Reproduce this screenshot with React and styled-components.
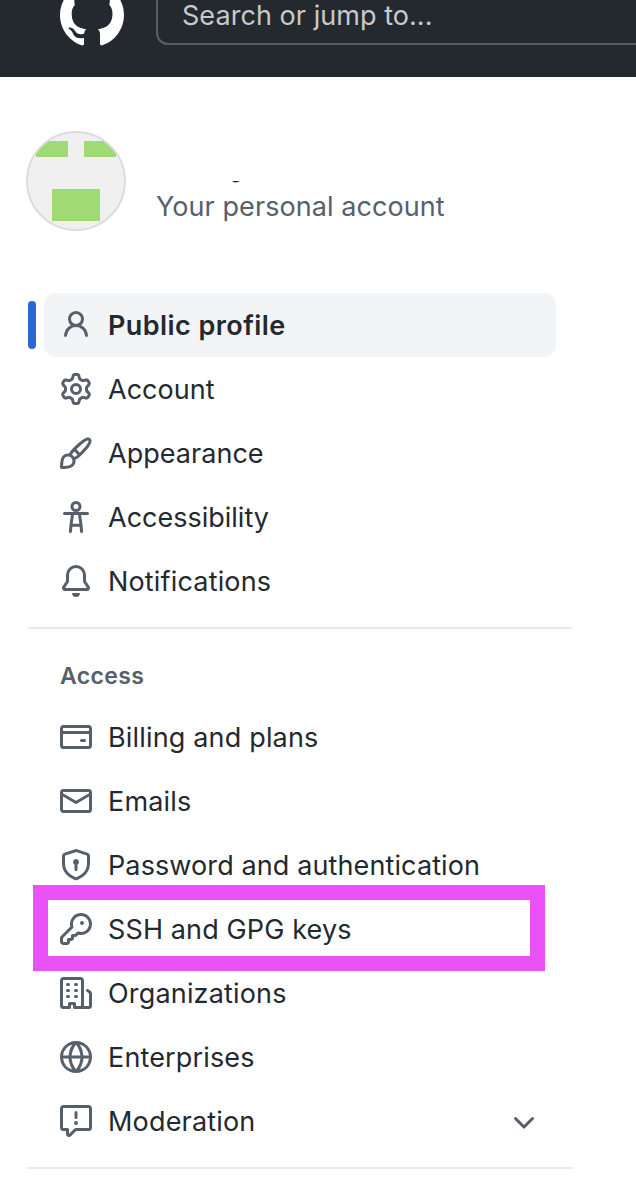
import React from 'react';
import styled, { createGlobalStyle } from 'styled-components';

const GlobalStyle = createGlobalStyle`
  * { box-sizing: border-box; }
  body {
    margin: 0;
    background: #fff;
    color: #24292f;
    font-family: Inter, "Liberation Sans", sans-serif;
    font-size: 27px;
    overflow: hidden;
  }
`;

const Page = styled.div`
  height: 1182px;
  overflow: hidden;
`;

const Header = styled.header`
  display: flex;
  align-items: flex-end;
  gap: 32px;
  height: 77px;
  padding: 0 0 32px 60px;
  background: #24292f;
  overflow: hidden;
`;

const Mark = styled.svg`
  flex: none;
  width: 64px;
  height: 64px;
  margin-bottom: -2px;
  fill: #fff;
`;

const Search = styled.div`
  flex: none;
  display: flex;
  align-items: center;
  width: 544px;
  height: 60px;
  padding-left: 24px;
  border: 2px solid #57606a;
  border-radius: 12px;
  color: #c8c9cb;
`;

const Text = styled.span`
  padding-top: 2px;
  white-space: nowrap;
  line-height: 28px;
  letter-spacing: ${(p) => p.$spacing || 0}px;
`;

const Profile = styled.section`
  display: flex;
  gap: 30px;
  padding: 54px 26px 0;
  height: 216px;
`;

const Avatar = styled.svg`
  flex: none;
  width: 100px;
  height: 100px;
`;

const Identity = styled.div`
  display: flex;
  flex-direction: column;
  gap: 7px;
  padding-top: 49px;
  color: #57606a;
`;

const NameTrace = styled.svg`
  display: block;
  width: 12px;
  height: 4px;
  margin-left: 74px;
`;

const Nav = styled.nav`
  width: 544px;
  margin-left: 28px;
`;

const List = styled.ul`
  list-style: none;
  margin: 0;
  padding: 0 16px;
`;

const Item = styled.li`
  position: relative;
  display: flex;
  align-items: center;
  gap: 16px;
  height: 64px;
  padding: 0 16px;
  border-radius: 12px;
  background: ${(p) => (p.$active ? '#f3f4f6' : 'transparent')};
  font-weight: ${(p) => (p.$active ? 600 : 400)};
`;

const ActiveBar = styled.span`
  position: absolute;
  left: -16px;
  top: 8px;
  width: 8px;
  height: 48px;
  border-radius: 4px;
  background: #2c66d6;
`;

const Highlight = styled.span`
  position: absolute;
  left: -11px;
  top: -12px;
  width: 512px;
  height: 86px;
  border: 15px solid #ea52f8;
`;

const Glyph = styled.svg`
  flex: none;
  width: 32px;
  height: 32px;
  fill: #57606a;
`;

const Chevron = styled(Glyph)`
  margin-left: auto;
`;

const Divider = styled.hr`
  height: 2px;
  margin: 14px 0;
  border: 0;
  background: #e6e9ed;
`;

const GroupTitle = styled.h2`
  margin: 0;
  padding: 13px 0 0 32px;
  height: 62px;
  color: #57606a;
  font-size: 23px;
  font-weight: 600;
  line-height: 40px;
  letter-spacing: ${(p) => p.$spacing}px;
`;

const icons = {
  person: 'M10.5 5a2.5 2.5 0 11-5 0 2.5 2.5 0 015 0zm.061 3.073a4 4 0 10-5.123 0 6.004 6.004 0 00-3.431 5.142.75.75 0 001.498.07 4.5 4.5 0 018.99 0 .75.75 0 101.498-.07 6.005 6.005 0 00-3.432-5.142z',
  gear: 'M7.429 1.525a6.593 6.593 0 011.142 0c.036.003.108.036.137.146l.289 1.105c.147.56.55.967.997 1.189.174.086.341.183.501.29.417.278.97.423 1.53.27l1.102-.303c.11-.03.175.016.195.046.219.31.41.641.573.989.014.031.022.11-.059.19l-.815.806c-.411.406-.562.957-.53 1.456a4.588 4.588 0 010 .582c-.032.499.119 1.05.53 1.456l.815.806c.08.08.073.159.059.19a6.494 6.494 0 01-.573.99c-.02.029-.086.074-.195.045l-1.103-.303c-.559-.153-1.112-.008-1.529.27-.16.107-.327.204-.5.29-.449.222-.851.628-.998 1.189l-.289 1.105c-.029.11-.101.143-.137.146a6.613 6.613 0 01-1.142 0c-.036-.003-.108-.037-.137-.146l-.289-1.105c-.147-.56-.55-.967-.997-1.189a4.502 4.502 0 01-.501-.29c-.417-.278-.97-.423-1.53-.27l-1.102.303c-.11.03-.175-.016-.195-.046a6.492 6.492 0 01-.573-.989c-.014-.031-.022-.11.059-.19l.815-.806c.411-.406.562-.957.53-1.456a4.587 4.587 0 010-.582c.032-.499-.119-1.05-.53-1.456l-.815-.806c-.08-.08-.073-.159-.059-.19a6.44 6.44 0 01.573-.99c.02-.029.086-.075.195-.045l1.103.303c.559.153 1.112.008 1.529-.27.16-.107.327-.204.5-.29.449-.222.851-.628.998-1.189l.289-1.105c.029-.11.101-.143.137-.146zM8 0c-.236 0-.47.01-.701.03-.743.065-1.29.615-1.458 1.261l-.29 1.106c-.017.066-.078.158-.211.224a5.994 5.994 0 00-.668.386c-.123.082-.233.09-.3.071L3.27 2.776c-.644-.177-1.392.02-1.82.63a7.977 7.977 0 00-.704 1.217c-.315.675-.111 1.422.363 1.891l.815.806c.05.048.098.147.088.294a6.084 6.084 0 000 .772c.01.147-.038.246-.088.294l-.815.806c-.474.469-.678 1.216-.363 1.891.2.428.436.835.704 1.218.428.609 1.176.806 1.82.63l1.103-.303c.066-.019.176-.011.299.071.213.143.436.272.668.386.133.066.194.158.212.224l.289 1.106c.169.646.715 1.196 1.458 1.26a8.094 8.094 0 001.402 0c.743-.064 1.29-.614 1.458-1.26l.29-1.106c.017-.066.078-.158.211-.224a5.98 5.98 0 00.668-.386c.123-.082.233-.09.3-.071l1.102.302c.644.177 1.392-.02 1.82-.63.268-.382.505-.789.704-1.217.315-.675.111-1.422-.364-1.891l-.814-.806c-.05-.048-.098-.147-.088-.294a6.1 6.1 0 000-.772c-.01-.147.039-.246.088-.294l.814-.806c.475-.469.679-1.216.364-1.891a7.992 7.992 0 00-.704-1.218c-.428-.609-1.176-.806-1.82-.63l-1.103.303c-.066.019-.176.011-.299-.071a5.991 5.991 0 00-.668-.386c-.133-.066-.194-.158-.212-.224L10.16 1.29C9.99.645 9.444.095 8.701.031A8.094 8.094 0 008 0zm1.5 8a1.5 1.5 0 11-3 0 1.5 1.5 0 013 0zM11 8a3 3 0 11-6 0 3 3 0 016 0z',
  brush: 'M11.134 1.535C9.722 2.562 8.16 4.057 6.889 5.312 5.8 6.387 5.041 7.401 4.575 8.294a3.745 3.745 0 00-3.227 1.054c-.43.431-.69 1.066-.86 1.657a11.982 11.982 0 00-.358 1.914A21.263 21.263 0 000 15.203v.054l.75-.007-.007.75h.054a14.404 14.404 0 00.654-.012 21.243 21.243 0 001.63-.118c.62-.07 1.3-.18 1.914-.357.592-.17 1.226-.43 1.657-.861a3.745 3.745 0 001.055-3.217c.908-.461 1.942-1.216 3.04-2.3 1.279-1.262 2.764-2.825 3.775-4.249.501-.706.923-1.428 1.125-2.096.2-.659.235-1.469-.368-2.07-.606-.607-1.42-.55-2.069-.34-.66.213-1.376.646-2.076 1.155zm-3.95 8.48a3.76 3.76 0 00-1.19-1.192 9.758 9.758 0 011.161-1.607l1.658 1.658a9.853 9.853 0 01-1.63 1.142zM.742 16l.007-.75-.75.008A.75.75 0 00.743 16zM12.016 2.749c-1.224.89-2.605 2.189-3.822 3.384l1.718 1.718c1.21-1.205 2.51-2.597 3.387-3.833.47-.662.78-1.227.912-1.662.134-.444.032-.551.009-.575h-.001V1.78c-.014-.014-.112-.113-.548.027-.432.14-.995.462-1.655.942zM1.62 13.089a19.56 19.56 0 00-.104 1.395 19.55 19.55 0 001.396-.104 10.528 10.528 0 001.668-.309c.526-.151.856-.325 1.011-.48a2.25 2.25 0 00-3.182-3.182c-.155.155-.329.485-.48 1.01a10.515 10.515 0 00-.309 1.67z',
  bell: 'M8 16a2 2 0 001.985-1.75c.017-.137-.097-.25-.235-.25h-3.5c-.138 0-.252.113-.235.25A2 2 0 008 16zM3 5a5 5 0 0110 0v2.947c0 .05.015.098.042.139l1.703 2.555A1.518 1.518 0 0113.482 13H2.518a1.518 1.518 0 01-1.263-2.36l1.703-2.554A.25.25 0 003 7.947V5zm5-3.5A3.5 3.5 0 004.5 5v2.947c0 .346-.102.683-.294.97l-1.703 2.556a.018.018 0 00-.003.01l.001.006c0 .002.002.004.004.006a.017.017 0 00.006.004l.007.001h10.964l.007-.001a.016.016 0 00.006-.004.016.016 0 00.004-.006l.001-.007a.017.017 0 00-.003-.01l-1.703-2.554a1.75 1.75 0 01-.294-.97V5A3.5 3.5 0 008 1.5z',
  card: 'M10.75 9a.75.75 0 000 1.5h1.5a.75.75 0 000-1.5h-1.5zM0 3.75C0 2.784.784 2 1.75 2h12.5c.966 0 1.75.784 1.75 1.75v8.5A1.75 1.75 0 0114.25 14H1.75A1.75 1.75 0 010 12.25v-8.5zm14.5 0V5h-13V3.75a.25.25 0 01.25-.25h12.5a.25.25 0 01.25.25zm0 2.75h-13v5.75c0 .138.112.25.25.25h12.5a.25.25 0 00.25-.25V6.5z',
  mail: 'M1.75 2A1.75 1.75 0 000 3.75v.736a.75.75 0 000 .027v7.737C0 13.216.784 14 1.75 14h12.5A1.75 1.75 0 0016 12.25v-8.5A1.75 1.75 0 0014.25 2H1.75zM14.5 4.07v-.32a.25.25 0 00-.25-.25H1.75a.25.25 0 00-.25.25v.32L8 7.88l6.5-3.81zm-13 1.74v6.441c0 .138.112.25.25.25h12.5a.25.25 0 00.25-.25V5.809L8.38 9.397a.75.75 0 01-.76 0L1.5 5.809z',
  shield: 'M8.533.133a1.75 1.75 0 00-1.066 0l-5.25 1.68A1.75 1.75 0 001 3.48V7c0 1.566.32 3.182 1.303 4.682.983 1.498 2.585 2.813 5.032 3.855a1.7 1.7 0 001.33 0c2.447-1.042 4.049-2.357 5.032-3.855C14.68 10.182 15 8.566 15 7V3.48a1.75 1.75 0 00-1.217-1.667L8.533.133zm-.61 1.429a.25.25 0 01.153 0l5.25 1.68a.25.25 0 01.174.238V7c0 1.358-.275 2.666-1.057 3.86-.784 1.194-2.121 2.34-4.366 3.297a.2.2 0 01-.154 0c-2.245-.956-3.582-2.104-4.366-3.298C2.775 9.666 2.5 8.36 2.5 7V3.48a.25.25 0 01.174-.237l5.25-1.68zM9.5 6.5a1.5 1.5 0 01-.75 1.3v2.45a.75.75 0 01-1.5 0V7.8A1.5 1.5 0 119.5 6.5z',
  key: 'M6.5 5.5a4 4 0 112.731 3.795.75.75 0 00-.768.18L7.44 10.5H6.25a.75.75 0 00-.75.75v1.19l-.06.06H4.25a.75.75 0 00-.75.75v1.19l-.06.06H1.75a.25.25 0 01-.25-.25v-1.69l5.024-5.023a.75.75 0 00.181-.768A3.995 3.995 0 016.5 5.5zm4-5.5a5.5 5.5 0 00-5.348 6.788L.22 11.72a.75.75 0 00-.22.53v2C0 15.216.784 16 1.75 16h2a.75.75 0 00.53-.22l.5-.5a.75.75 0 00.22-.53V14h.75a.75.75 0 00.53-.22l.5-.5a.75.75 0 00.22-.53V12h.75a.75.75 0 00.53-.22l.932-.932A5.5 5.5 0 1010.5 0zm.5 6a1 1 0 100-2 1 1 0 000 2z',
  organization: 'M1.5 14.25c0 .138.112.25.25.25H4v-1.25a.75.75 0 01.75-.75h2.5a.75.75 0 01.75.75v1.25h2.25a.25.25 0 00.25-.25V1.75a.25.25 0 00-.25-.25h-8.5a.25.25 0 00-.25.25v12.5zM1.75 16A1.75 1.75 0 010 14.25V1.75C0 .784.784 0 1.75 0h8.5C11.216 0 12 .784 12 1.75v12.5c0 .085-.006.168-.018.25h2.268a.25.25 0 00.25-.25V8.285a.25.25 0 00-.111-.208l-1.055-.703a.75.75 0 11.832-1.248l1.055.703c.487.325.779.871.779 1.456v5.965A1.75 1.75 0 0114.25 16h-3.5a.75.75 0 01-.197-.026c-.099.017-.2.026-.303.026h-3a.75.75 0 01-.75-.75V14h-1v1.25a.75.75 0 01-.75.75h-3zM3 3.75A.75.75 0 013.75 3h.5a.75.75 0 010 1.5h-.5A.75.75 0 013 3.75zM3.75 6a.75.75 0 000 1.5h.5a.75.75 0 000-1.5h-.5zM3 9.75A.75.75 0 013.75 9h.5a.75.75 0 010 1.5h-.5A.75.75 0 013 9.75zM7.75 9a.75.75 0 000 1.5h.5a.75.75 0 000-1.5h-.5zM7 6.75A.75.75 0 017.75 6h.5a.75.75 0 010 1.5h-.5A.75.75 0 017 6.75zM7.75 3a.75.75 0 000 1.5h.5a.75.75 0 000-1.5h-.5z',
  globe: 'M1.543 7.25h2.733c.144-2.074.866-3.756 1.58-4.948.12-.197.237-.381.353-.552a6.506 6.506 0 00-4.666 5.5zm2.733 1.5H1.543a6.506 6.506 0 004.666 5.5 11.13 11.13 0 01-.352-.552c-.715-1.192-1.437-2.874-1.581-4.948zm1.504 0h4.44a9.637 9.637 0 01-1.363 4.177c-.306.51-.612.919-.857 1.215a9.978 9.978 0 01-.857-1.215A9.637 9.637 0 015.78 8.75zm4.44-1.5H5.78a9.637 9.637 0 011.363-4.177c.306-.51.612-.919.857-1.215.245.296.55.705.857 1.215A9.638 9.638 0 0110.22 7.25zm1.504 1.5c-.144 2.074-.866 3.756-1.58 4.948-.12.197-.237.381-.353.552a6.506 6.506 0 004.666-5.5h-2.733zm2.733-1.5h-2.733c-.144-2.074-.866-3.756-1.58-4.948a11.738 11.738 0 00-.353-.552 6.506 6.506 0 014.666 5.5zM8 0a8 8 0 100 16A8 8 0 008 0z',
  report: 'M0 1.75C0 .784.784 0 1.75 0h12.5C15.216 0 16 .784 16 1.75v9.5A1.75 1.75 0 0114.25 13H8.06l-2.573 2.573A1.457 1.457 0 013 14.543V13H1.75A1.75 1.75 0 010 11.25v-9.5zm1.75-.25a.25.25 0 00-.25.25v9.5c0 .138.112.25.25.25h2a.75.75 0 01.75.75v2.189l2.72-2.719a.75.75 0 01.53-.22h6.5a.25.25 0 00.25-.25v-9.5a.25.25 0 00-.25-.25H1.75zM9 9a1 1 0 11-2 0 1 1 0 012 0zm-.25-5.25a.75.75 0 00-1.5 0v2.5a.75.75 0 001.5 0v-2.5z',
  chevron: 'M12.78 6.22a.75.75 0 010 1.06l-4.25 4.25a.75.75 0 01-1.06 0L3.22 7.28a.75.75 0 011.06-1.06L8 9.94l3.72-3.72a.75.75 0 011.06 0z',
  github: 'M8 0C3.58 0 0 3.58 0 8c0 3.54 2.29 6.53 5.47 7.59.4.07.55-.17.55-.38 0-.19-.01-.82-.01-1.49-2.01.37-2.53-.49-2.69-.94-.09-.23-.48-.94-.82-1.13-.28-.15-.68-.52-.01-.53.63-.01 1.08.58 1.23.82.72 1.21 1.87.87 2.33.66.07-.52.28-.87.51-1.07-1.78-.2-3.64-.89-3.64-3.95 0-.87.31-1.59.82-2.15-.08-.2-.36-1.02.08-2.12 0 0 .67-.21 2.2.82.64-.18 1.32-.27 2-.27.68 0 1.36.09 2 .27 1.53-1.04 2.2-.82 2.2-.82.44 1.1.16 1.92.08 2.12.51.56.82 1.27.82 2.15 0 3.07-1.87 3.75-3.65 3.95.29.25.54.73.54 1.48 0 1.07-.01 1.93-.01 2.2 0 .21.15.46.55.38A8.013 8.013 0 0016 8c0-4.42-3.58-8-8-8z',
};

function Icon({ name }) {
  if (name === 'accessibility') {
    return (
      <Glyph viewBox="0 0 16 16">
        <g fill="none" stroke="#57606a" strokeWidth="1.5" strokeLinecap="round" strokeLinejoin="round">
          <circle cx="8" cy="2.75" r="2" />
          <path d="M2.25 6.2h11.5M6.3 6.4l-.7 4.8-.4 4.05M9.7 6.4l.7 4.8.4 4.05M5.7 12.1h4.6" />
        </g>
      </Glyph>
    );
  }
  return (
    <Glyph viewBox="0 0 16 16">
      <path fillRule="evenodd" d={icons[name]} />
    </Glyph>
  );
}

const general = [
  { icon: 'person', label: 'Public profile', active: true, spacing: 0.43 },
  { icon: 'gear', label: 'Account', spacing: 0.03 },
  { icon: 'brush', label: 'Appearance', spacing: 0.03 },
  { icon: 'accessibility', label: 'Accessibility', spacing: 0 },
  { icon: 'bell', label: 'Notifications', spacing: 0.17 },
];

const access = [
  { icon: 'card', label: 'Billing and plans', spacing: 0.17 },
  { icon: 'mail', label: 'Emails', spacing: 0.17 },
  { icon: 'shield', label: 'Password and authentication', spacing: 0.11 },
  { icon: 'key', label: 'SSH and GPG keys', highlighted: true, spacing: 0.13 },
  { icon: 'organization', label: 'Organizations', spacing: 0.17 },
  { icon: 'globe', label: 'Enterprises', spacing: 0.15 },
  { icon: 'report', label: 'Moderation', expandable: true, spacing: 0.18 },
];

function NavList({ items }) {
  return (
    <List>
      {items.map((item) => (
        <Item key={item.label} $active={item.active}>
          {item.active && <ActiveBar />}
          <Icon name={item.icon} />
          <Text $spacing={item.spacing}>{item.label}</Text>
          {item.expandable && (
            <Chevron viewBox="0 0 16 16">
              <path d={icons.chevron} />
            </Chevron>
          )}
          {item.highlighted && <Highlight />}
        </Item>
      ))}
    </List>
  );
}

export default function App() {
  return (
    <Page>
      <GlobalStyle />
      <Header>
        <Mark viewBox="0 0 16 16">
          <path fillRule="evenodd" d={icons.github} />
        </Mark>
        <Search>
          <Text $spacing={0.05}>Search or jump to...</Text>
        </Search>
      </Header>
      <Profile>
        <Avatar viewBox="0 0 100 100">
          <clipPath id="avatar-clip">
            <circle cx="50" cy="50" r="49" />
          </clipPath>
          <g clipPath="url(#avatar-clip)">
            <rect width="100" height="100" fill="#f0f0f0" />
            <path d="M10 10h32v16H10zM58 10h32v16H58zM26 58h48v32H26z" fill="#a0da73" />
          </g>
          <circle cx="50" cy="50" r="49" fill="none" stroke="#dcdcdc" strokeWidth="2" />
        </Avatar>
        <Identity>
          <NameTrace viewBox="0 0 12 4">
            <path d="M2 1h8q-2 1.4-4.500 1.400T2 1z" fill="#24292f" />
          </NameTrace>
          <Text $spacing={0.07}>Your personal account</Text>
        </Identity>
      </Profile>
      <Nav>
        <NavList items={general} />
        <Divider />
        <GroupTitle $spacing={0.35}>Access</GroupTitle>
        <NavList items={access} />
        <Divider />
      </Nav>
    </Page>
  );
}
